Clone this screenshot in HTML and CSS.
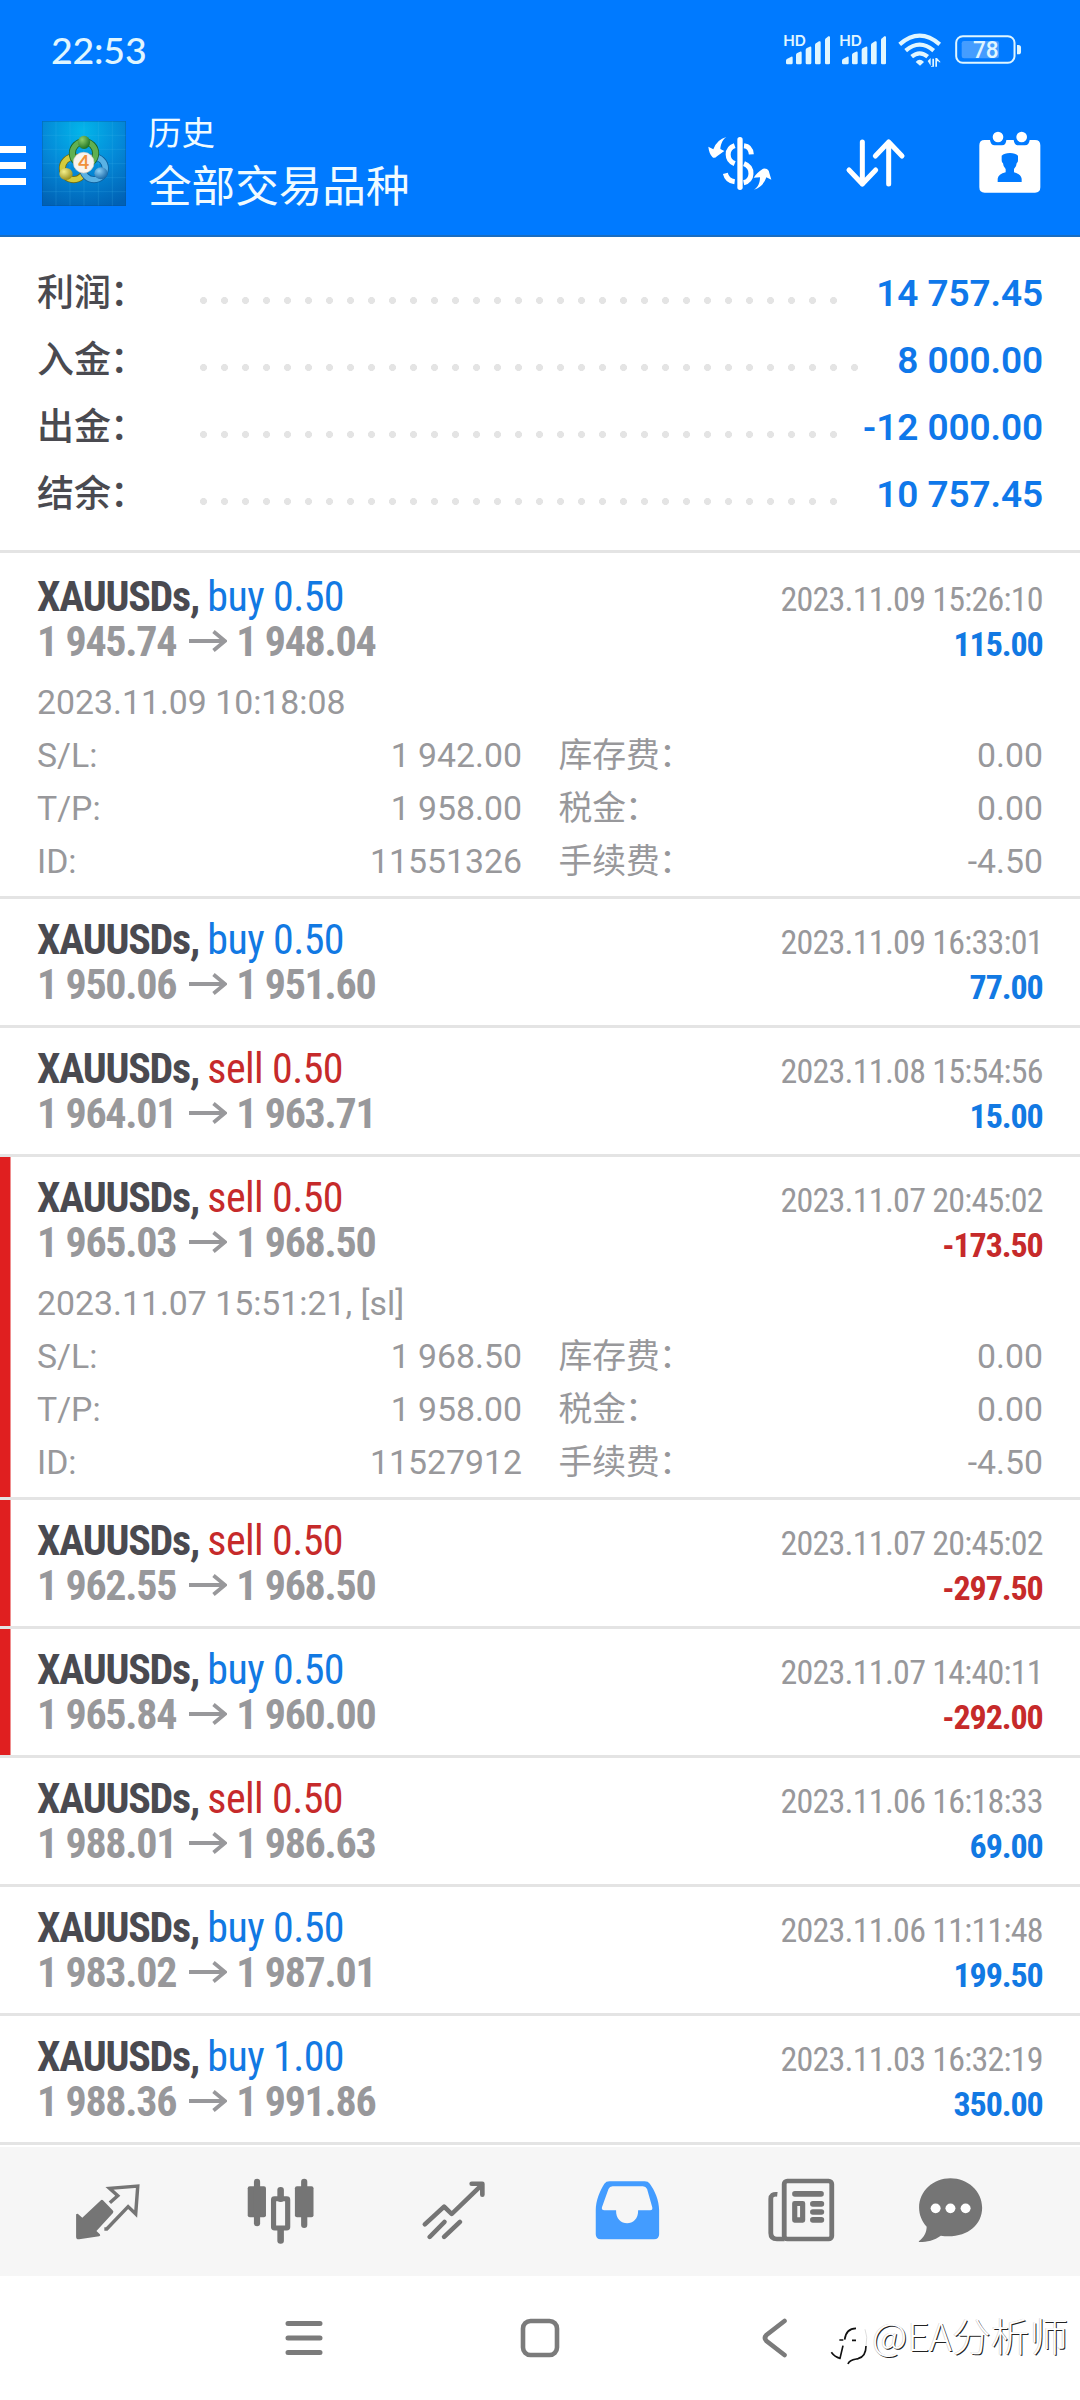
FILE: index.html
```
<!DOCTYPE html>
<html lang="zh-CN">
<head>
<meta charset="utf-8">
<title>历史</title>
<link rel="stylesheet" href="styles.css">
</head>
<body>
<header class="top">
  <div class="status">
    <span class="clock">22:53</span>
    <svg class="status-icons" viewBox="366 96 722 110" fill="#e0f6ff">
      <g id="sig">
        <text x="370" y="137" font-size="43" font-weight="600" font-family="Inter, sans-serif" textLength="68" lengthAdjust="spacingAndGlyphs">HD</text>
        <path d="M378 182q0-4 4-6l12-6q4-1 4 3v16q0 4-4 4h-12q-4 0-4-4zM408 165q0-4 4-6l8-4q5-2 5 3v31q0 4-4 4h-9q-4 0-4-4zM437 150q0-4 4-6l8-4q5-2 5 3v46q0 4-4 4h-9q-4 0-4-4zM465 135q0-4 4-6l8-5q5-2 5 3v62q0 4-4 4h-9q-4 0-4-4zM495 120q0-4 4-6l6-5q5-2 5 3v77q0 4-4 4h-7q-4 0-4-4z"/>
      </g>
      <use href="#sig" x="168"/>
      <g fill="none" stroke="#e0f6ff" stroke-width="12.500">
        <path d="M719 133q60-52 120 0M737 152q42-36 84 0M755 170q24-20 48 0"/>
      </g>
      <path d="M767 186q12-14 25 0l-12 11zM803 183l9-9v24h5v-22h5v24h-8zM826 200v-26h5l11 13h-6v-3h-5v16z"/>
      <rect x="888.500" y="108.500" width="175" height="80" rx="20" fill="none" stroke-width="6" stroke="#e0f6ff"/>
      <rect x="905" y="123" width="112" height="52" rx="7" fill="#459dff"/>
      <path d="M1071 135h4q8 0 8 8v12q0 8-8 8h-4z"/>
      <text x="939" y="174" font-size="69" font-weight="500" font-family="Roboto, sans-serif" textLength="77" lengthAdjust="spacingAndGlyphs">78</text>
    </svg>
  </div>
  <div class="appbar">
    <span class="burger"><i></i><i></i><i></i></span>
    <svg class="logo" viewBox="18 15 252 255">
      <defs>
        <radialGradient id="bg" cx=".48" cy=".12" r=".95"><stop offset="0" stop-color="#02b6ea"/><stop offset=".5" stop-color="#0489d8"/><stop offset="1" stop-color="#0061b4"/></radialGradient>
        <radialGradient id="gr" cx=".35" cy=".3" r=".8"><stop offset="0" stop-color="#8fd06c"/><stop offset="1" stop-color="#12691c"/></radialGradient>
        <radialGradient id="ye" cx=".35" cy=".3" r=".8"><stop offset="0" stop-color="#f5f08a"/><stop offset="1" stop-color="#8f8512"/></radialGradient>
        <radialGradient id="bl" cx=".35" cy=".3" r=".8"><stop offset="0" stop-color="#8ed0f5"/><stop offset="1" stop-color="#0c5ea0"/></radialGradient>
      </defs>
      <path fill="url(#bg)" d="M18 15h252v255H18z"/>
      <path d="M18 58h252M18 100h252M18 143h252M18 185h252M18 227h252M60 15v255M102 15v255M144 15v255M187 15v255M229 15v255" stroke="#4cc0ee" stroke-opacity=".28" stroke-width="2"/>
      <path d="M19 16h250v253H19z" fill="none" stroke="#0a4f96" stroke-opacity=".6" stroke-width="2"/>
      <g fill="none">
        <circle cx="113" cy="157" r="34" stroke="#6f6b12" stroke-width="21"/>
        <circle cx="113" cy="157" r="34" stroke="#d2cb3c" stroke-width="16"/>
        <circle cx="174" cy="157" r="34" stroke="#0f5f9c" stroke-width="21"/>
        <circle cx="174" cy="157" r="34" stroke="#5ab2e4" stroke-width="16"/>
        <circle cx="144" cy="112" r="35" stroke="#1b6426" stroke-width="21"/>
        <circle cx="144" cy="112" r="35" stroke="#5fb051" stroke-width="16"/>
      </g>
      <ellipse cx="144" cy="79" rx="18" ry="20" fill="url(#gr)"/>
      <ellipse cx="90" cy="174" rx="20" ry="18" fill="url(#ye)"/>
      <ellipse cx="195" cy="172" rx="20" ry="18" fill="url(#bl)"/>
      <circle cx="143" cy="140" r="31" fill="#f7f4ef" stroke="#d5cfc4" stroke-width="2"/>
      <text x="143" y="160" text-anchor="middle" font-family="Lato, sans-serif" font-weight="700" font-size="57" fill="#f0913a">4</text>
    </svg>
    <div class="titles"><span class="t1">历史</span><span class="t2">全部交易品种</span></div>
    <svg class="act a1" viewBox="20 15 200 170" fill="#fff">
      <rect x="111" y="21" width="16" height="159" rx="8"/>
      <path d="M131 47q20 2 22 26M103 47C77 56 77 90 103 101M131 101C160 112 158 152 130 158M75 130Q80 152 103 155" fill="none" stroke="#fff" stroke-width="15"/>
      <path d="M78 21C64 31 61 46 60 57l12 6-22 16q-8 8-14 2Q26 70 24 50l15 8Q50 28 78 21zM161 179c12-6 18-20 18-37l-19 1q8-14 28-27 12-2 17 6l8 27-15-7q-8 27-37 37z"/>
    </svg>
    <svg class="act a2" viewBox="555 412 185 155" fill="none" stroke="#fff" stroke-width="15" stroke-linecap="round" stroke-linejoin="round">
      <path d="M607 427v126M567 511l40 42 40-42M686 553V427M646 469l40-42 40 42"/>
    </svg>
    <svg class="act a3" viewBox="955 390 192 195">
      <path fill="#fff" d="M975 420h16q2 16 14 16h22q12 0 13-16h22q2 16 14 16h20q12 0 14-16h16q16 0 16 16v126q0 16-16 16H975q-16 0-16-16V436q0-16 16-16z"/>
      <circle cx="1015" cy="411" r="16" fill="#fff"/><circle cx="1086" cy="411" r="16" fill="#fff"/>
      <path fill="#007aff" d="M1014 546v-10q2-14 24-19v-10q-8-8-8-17-4-1-4-9v-14q8-8 25-8 16 0 24 8v14q0 8-4 9 0 9-8 17v10q21 5 23 19v10z"/>
    </svg>
  </div>
</header>

<section class="summary">
  <div class="sum"><span>利润<i class="colon">：</i></span><i class="dots"></i><b>14 757.45</b></div>
  <div class="sum"><span>入金<i class="colon">：</i></span><i class="dots wide"></i><b>8 000.00</b></div>
  <div class="sum"><span>出金<i class="colon">：</i></span><i class="dots"></i><b>-12 000.00</b></div>
  <div class="sum"><span>结余<i class="colon">：</i></span><i class="dots"></i><b>10 757.45</b></div>
</section>

<svg class="defs"><symbol id="arr" viewBox="0 0 38 22"><path d="M0 11h36M24.500 1.500L36 11 24.500 20.500" fill="none" stroke="#98989b" stroke-width="3.800"/></symbol></svg>

<main class="list">
  <article class="deal first">
    <div class="head"><div><div class="sym">XAUUSDs, <em class="buy">buy 0.50</em></div><div class="price">1 945.74<svg><use href="#arr"/></svg>1 948.04</div></div><div class="right"><div class="time">2023.11.09 15:26:10</div><div class="pl buy">115.00</div></div></div>
    <div class="detail">
      <div class="opened">2023.11.09 10:18:08</div>
      <span>S/L:</span><span class="v">1 942.00</span><span class="k">库存费<i class="colon">：</i></span><span class="v">0.00</span>
      <span>T/P:</span><span class="v">1 958.00</span><span class="k">税金<i class="colon">：</i></span><span class="v">0.00</span>
      <span>ID:</span><span class="v">11551326</span><span class="k">手续费<i class="colon">：</i></span><span class="v">-4.50</span>
    </div>
  </article>
  <article class="deal">
    <div class="head"><div><div class="sym">XAUUSDs, <em class="buy">buy 0.50</em></div><div class="price">1 950.06<svg><use href="#arr"/></svg>1 951.60</div></div><div class="right"><div class="time">2023.11.09 16:33:01</div><div class="pl buy">77.00</div></div></div>
  </article>
  <article class="deal">
    <div class="head"><div><div class="sym">XAUUSDs, <em class="sell">sell 0.50</em></div><div class="price">1 964.01<svg><use href="#arr"/></svg>1 963.71</div></div><div class="right"><div class="time">2023.11.08 15:54:56</div><div class="pl buy">15.00</div></div></div>
  </article>
  <article class="deal loss">
    <div class="head"><div><div class="sym">XAUUSDs, <em class="sell">sell 0.50</em></div><div class="price">1 965.03<svg><use href="#arr"/></svg>1 968.50</div></div><div class="right"><div class="time">2023.11.07 20:45:02</div><div class="pl sell">-173.50</div></div></div>
    <div class="detail">
      <div class="opened">2023.11.07 15:51:21, [sl]</div>
      <span>S/L:</span><span class="v">1 968.50</span><span class="k">库存费<i class="colon">：</i></span><span class="v">0.00</span>
      <span>T/P:</span><span class="v">1 958.00</span><span class="k">税金<i class="colon">：</i></span><span class="v">0.00</span>
      <span>ID:</span><span class="v">11527912</span><span class="k">手续费<i class="colon">：</i></span><span class="v">-4.50</span>
    </div>
  </article>
  <article class="deal loss">
    <div class="head"><div><div class="sym">XAUUSDs, <em class="sell">sell 0.50</em></div><div class="price">1 962.55<svg><use href="#arr"/></svg>1 968.50</div></div><div class="right"><div class="time">2023.11.07 20:45:02</div><div class="pl sell">-297.50</div></div></div>
  </article>
  <article class="deal loss">
    <div class="head"><div><div class="sym">XAUUSDs, <em class="buy">buy 0.50</em></div><div class="price">1 965.84<svg><use href="#arr"/></svg>1 960.00</div></div><div class="right"><div class="time">2023.11.07 14:40:11</div><div class="pl sell">-292.00</div></div></div>
  </article>
  <article class="deal">
    <div class="head"><div><div class="sym">XAUUSDs, <em class="sell">sell 0.50</em></div><div class="price">1 988.01<svg><use href="#arr"/></svg>1 986.63</div></div><div class="right"><div class="time">2023.11.06 16:18:33</div><div class="pl buy">69.00</div></div></div>
  </article>
  <article class="deal">
    <div class="head"><div><div class="sym">XAUUSDs, <em class="buy">buy 0.50</em></div><div class="price">1 983.02<svg><use href="#arr"/></svg>1 987.01</div></div><div class="right"><div class="time">2023.11.06 11:11:48</div><div class="pl buy">199.50</div></div></div>
  </article>
  <article class="deal">
    <div class="head"><div><div class="sym">XAUUSDs, <em class="buy">buy 1.00</em></div><div class="price">1 988.36<svg><use href="#arr"/></svg>1 991.86</div></div><div class="right"><div class="time">2023.11.03 16:32:19</div><div class="pl buy">350.00</div></div></div>
  </article>
</main>

<nav class="tabs">
  <svg viewBox="212 140 200 205" preserveAspectRatio="none"><path fill="#757575" d="M221 252q4-4 8 1l10 9 54-52q3-3 6 0l28 30q4 4 1 8l-48 54 10 10q3 5-2 6l-58 9q-9 1-9-8z"/><path d="M303 296h7l62-67 22 22 6-84-82 7 24 22-23 21" fill="none" stroke="#757575" stroke-width="10"/></svg>
  <svg viewBox="713 140 200 205" preserveAspectRatio="none" fill="#757575"><rect x="718" y="168" width="53" height="93" rx="6"/><rect x="736" y="145" width="18" height="143" rx="9"/><rect x="855" y="168" width="54" height="93" rx="6"/><rect x="873" y="145" width="18" height="148" rx="9"/><rect x="804" y="170" width="19" height="45" rx="9"/><rect x="804" y="290" width="19" height="50" rx="9"/><rect x="793" y="205" width="41" height="88" rx="3" fill="none" stroke="#757575" stroke-width="15"/></svg>
  <svg viewBox="1218 140 200 205" preserveAspectRatio="none" fill="none" stroke="#757575" stroke-width="13.500" stroke-linecap="round" stroke-linejoin="round"><path d="M1232 282l56-53 22 22 86-86M1246 320l43-45M1288 320l46-45M1368 160h31v33"/></svg>
  <svg viewBox="154 140 200 205" preserveAspectRatio="none"><path fill="#439cff" fill-rule="evenodd" d="M202 153h102q10 0 15 7c14 20 27 50 27 80v72q0 15-15 15H177q-15 0-15-15v-72c0-30 12-58 25-80q5-7 15-7zM211 168q-9 0-12 8l-19 55q-2 9 7 9h34c-2 52 66 52 64 0h35q8 0 6-9l-15-55q-4-8-12-8z"/></svg>
  <svg viewBox="660 140 200 205" preserveAspectRatio="none"><g fill="none" stroke="#757575" stroke-width="14"><rect x="710" y="152" width="138" height="174" rx="9"/><path d="M690 192q-19-2-19 14v102q0 18 18 18h22"/></g><g fill="#757575"><rect x="733" y="182" width="92" height="17" rx="8"/><rect x="785" y="212" width="41" height="17" rx="8"/><rect x="785" y="237" width="41" height="16" rx="8"/><rect x="785" y="260" width="41" height="17" rx="8"/><path fill-rule="evenodd" d="M740 212h24q7 0 7 7v51q0 7-7 7h-24q-7 0-7-7v-51q0-7 7-7zM748 227v34h8v-34z"/></g></svg>
  <svg viewBox="1093 140 200 205" preserveAspectRatio="none"><path fill="#757575" d="M1193 144c50 0 92 38 92 88 0 56-50 94-120 84-18 14-40 19-62 19-3 0-2-3 0-4 12-9 21-25 21-42-14-16-22-36-22-57 0-50 41-88 91-88z"/><g fill="#fff"><circle cx="1150" cy="234" r="14.500"/><circle cx="1193" cy="234" r="14.500"/><circle cx="1237" cy="234" r="14.500"/></g></svg>
</nav>

<footer class="sysnav">
  <svg width="38" height="42" viewBox="0 0 38 42"><path d="M3 6.500h32M3 21h32M3 35.500h32" stroke="#7b7b7b" stroke-width="5" stroke-linecap="round"/></svg>
  <svg width="42" height="42" viewBox="0 0 42 42"><rect x="4" y="4" width="34" height="34" rx="7.500" fill="none" stroke="#7b7b7b" stroke-width="4.600"/></svg>
  <svg width="28" height="42" viewBox="0 0 28 42"><path d="M22.500 4L4.500 18q-3 3 0 6l18 14" fill="none" stroke="#7b7b7b" stroke-width="4.600" stroke-linecap="round"/></svg>
</footer>
<div class="watermark">
  <svg width="38" height="50" viewBox="28 42 114 150" fill="none" stroke-width="5"><path d="M56 87h12M94 88h12M72 86q4-34 34-34M32 124q10 14 26 18l9-38M82 159c4-14 20-14 30-16 16-4 24-18 24-38" stroke="#111"/><path d="M136 105q6-28-3-50" stroke="#ccc" stroke-width="2"/></svg><span>@EA分析师</span>
</div>
</body>
</html>
```
FILE: styles.css
```
* { box-sizing: border-box; }
html, body { margin: 0; }
body {
  position: relative;
  width: 1080px; height: 2400px; overflow: hidden;
  background: #fff; color: #4a4a50;
  font-family: Roboto, "Noto Sans CJK SC", sans-serif;
  display: flex; flex-direction: column;
}
svg { display: block; }
.defs { width: 0; height: 0; position: absolute; }
em, i { font-style: normal; }

.top { height: 237px; background: #007aff; border-bottom: 2px solid #1a6dc0; flex: none; }
.status { height: 100px; display: flex; justify-content: space-between; padding: 0 57px 0 51px; }
.clock { font: 500 37.500px/99px Lato, sans-serif; color: #e0f6ff; letter-spacing: -.2px; }
.status-icons { width: 240.700px; height: 36.700px; margin-top: 32px; }
.appbar { height: 135px; display: flex; color: #f0fbff; }
.burger { width: 26px; margin: 46px 16px 0 0; display: flex; flex-direction: column; gap: 9px; }
.burger i { height: 7px; background: #fff; }
.logo { width: 84px; height: 85px; margin-top: 21px; }
.titles { margin: 9px 0 0 22px; display: flex; flex-direction: column; }
.t1 { font-size: 33.500px; line-height: 50px; }
.t2 { font-size: 43.600px; line-height: 58px; }
.a1 { width: 66.700px; height: 56.700px; margin: 35px 0 0 auto; }
.a2 { width: 61.700px; height: 51.700px; margin: 37.300px 0 0 71.700px; }
.a3 { width: 64px; height: 65px; margin: 30px 37.700px 0 71.600px; }

.summary { height: 316px; flex: none; padding: 23px 37px 0; border-bottom: 3px solid #e4e4e4; }
.sum { display: flex; height: 67px; line-height: 67px; font-size: 37px; font-weight: 500; }
.sum span { width: 155.500px; white-space: nowrap; }
.sum b { margin-left: auto; font-weight: 600; color: #0f78ea; letter-spacing: -.1px; }
.colon { margin-left: -.03em; }
.dots { width: 651px; height: 7px; margin-top: 37px; background: radial-gradient(circle at 10.500px 3.500px, #e4e4e4 3.200px, transparent 3.800px) 0 0 / 21px 7px repeat-x; }
.dots.wide { width: 672px; }

.list { flex: none; }
.deal { padding: 18px 37px; border-bottom: 3px solid #e4e4e4; height: 129px; }
.deal:has(.detail) { height: 343px; }
.deal.first { padding-top: 21px; height: 346px; }
.loss { background: linear-gradient(#e01f20, #e01f20) 0 0 / 10.500px 100% no-repeat padding-box; }
.head { display: flex; justify-content: space-between; height: 90px; line-height: 45px; font-stretch: 75%; }
.sym, .price { font-size: 42px; font-weight: 700; }
.sym { letter-spacing: -1.25px; }
.sym em { font-weight: 400; letter-spacing: -.6px; }
.price { color: #98989b; display: flex; letter-spacing: -1.25px; }
.price svg { width: 38px; height: 22px; margin: 10.500px 9.500px 0 12.500px; }
.right { text-align: right; padding-top: 3px; font-size: 34px; color: #98989b; }
.time { letter-spacing: -.75px; margin-right: .2px; }
.pl { font-weight: 700; letter-spacing: -1.1px; margin-right: .3px; }
.buy, .pl.buy { color: #1279e3; }
.sell, .pl.sell { color: #c62a2a; }
.detail { margin-top: 12px; display: grid; grid-template-columns: 110px 375px 261px 260px; line-height: 53px; font-size: 33.800px; color: #98989b; }
.opened { grid-column: 1 / -1; }
.v { text-align: right; }
.k { padding-left: 36.500px; }

.tabs { height: 129px; margin-top: 2px; flex: none; background: #f6f6f6; padding: 29.700px 0 0 20.700px; display: grid; grid-template-columns: repeat(5, 173.500px) 124.600px; justify-items: center; align-items: start; }
.tabs svg { width: 68.900px; height: 68.300px; }
.sysnav { height: 124px; display: grid; grid-template-columns: repeat(3, 236px); justify-content: center; place-items: center; }
.watermark { position: absolute; left: 830px; top: 2313px; display: flex; align-items: flex-start; color: #fff; font: 300 38.700px/42px "Noto Sans CJK SC", sans-serif; text-shadow: 1px 1px 0 #222, -.5px -.5px 0 #ccc; }
.watermark svg { margin-top: 12px; }
.watermark span { margin-left: 4px; }
```
